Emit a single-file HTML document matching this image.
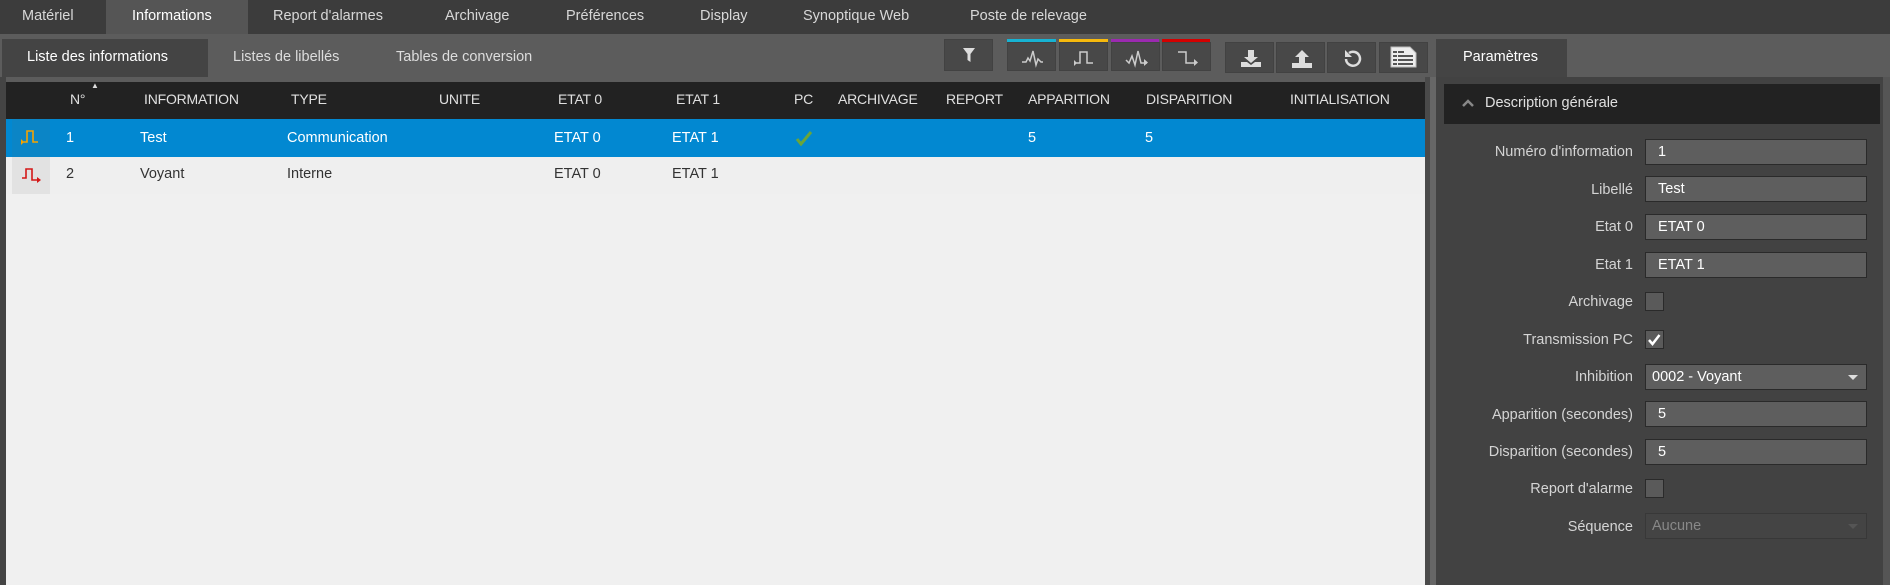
<!DOCTYPE html>
<html><head><meta charset="utf-8">
<style>
*{margin:0;padding:0;box-sizing:border-box}
body{width:1890px;height:585px;overflow:hidden;background:#5c5c5c;font-family:"Liberation Sans",sans-serif;font-size:14.5px;color:#ddd;position:relative}
.a{position:absolute;white-space:nowrap}
.top{left:0;top:0;width:1890px;height:34px;background:#3c3c3c}
.tt{top:8px;color:#d8d8d8}
.btn{position:absolute;top:42px;width:49px;height:29px;background:#484848;border:1px solid #424242}
.btn svg{position:absolute;left:12px;top:5px}
.th{top:91px;color:#e0e0e0;font-size:14px;letter-spacing:-0.2px}
.r1{top:130px;color:#fff}
.r2{top:166px;color:#333}
.lab{right:257px;color:#d4d4d4;text-align:right;font-size:14.5px}
.inp{left:1645px;width:222px;height:26px;background:#5e5e5e;border:1px solid #2a2a2a;color:#fff;padding:4px 0 0 12px}
.cb{left:1645px;width:19px;height:19px;background:#5a5a5a;border:1px solid #2a2a2a}
</style></head><body>
<div class="a top"></div>
<div class="a" style="left:106px;top:0;width:142px;height:34px;background:#555"></div>
<div class="a tt" style="left:22px">Matériel</div>
<div class="a tt" style="left:132px;color:#fff">Informations</div>
<div class="a tt" style="left:273px">Report d'alarmes</div>
<div class="a tt" style="left:445px">Archivage</div>
<div class="a tt" style="left:566px">Préférences</div>
<div class="a tt" style="left:700px">Display</div>
<div class="a tt" style="left:803px">Synoptique Web</div>
<div class="a tt" style="left:970px">Poste de relevage</div>

<div class="a" style="left:2px;top:39px;width:206px;height:38px;background:#444"></div>
<div class="a" style="left:27px;top:49px;color:#fff">Liste des informations</div>
<div class="a" style="left:233px;top:49px;color:#ddd">Listes de libellés</div>
<div class="a" style="left:396px;top:49px;color:#ddd">Tables de conversion</div>

<div class="btn" style="left:944px;top:39px;height:32px"><svg width="24" height="20" viewBox="0 0 24 20"><path d="M6 3h12l-4.5 6v8l-3-2V9z" fill="#ddd"/></svg></div>
<div class="a" style="left:1007px;top:39px;width:49px;height:3px;background:#17b3d3"></div>
<div class="a" style="left:1059px;top:39px;width:49px;height:3px;background:#f6b90d"></div>
<div class="a" style="left:1111px;top:39px;width:48px;height:3px;background:#9b2ab0"></div>
<div class="a" style="left:1162px;top:39px;width:48px;height:3px;background:#d40000"></div>
<div class="btn" style="left:1007px"><svg width="26" height="20" viewBox="0 0 26 20"><path d="M2 14h4l2-4 2 3 3-10 3 14 2-6 3 3h2" fill="none" stroke="#ccc" stroke-width="1.5"/></svg></div>
<div class="btn" style="left:1059px"><svg width="26" height="20" viewBox="0 0 26 20"><path d="M3 15h5V4h7v11h6" fill="none" stroke="#ccc" stroke-width="1.5"/><path d="M2 12v6l3-3z" fill="#ccc"/></svg></div>
<div class="btn" style="left:1111px"><svg width="26" height="20" viewBox="0 0 26 20"><path d="M2 12l3 3 3-7 3 9 3-14 3 12 6 0" fill="none" stroke="#ccc" stroke-width="1.5"/><path d="M20 11v7l4-3.5z" fill="#ccc"/></svg></div>
<div class="btn" style="left:1162px"><svg width="26" height="20" viewBox="0 0 26 20"><path d="M3 4h8v11h8" fill="none" stroke="#ccc" stroke-width="1.5"/><path d="M19 11v7l4-3.5z" fill="#ccc"/><path d="M11 4h0" stroke="#ccc"/></svg></div>

<div class="btn" style="left:1225px;height:31px"><svg width="26" height="22" viewBox="0 0 26 22"><path d="M10 2h6v7h4l-7 6-7-6h4z" fill="#ddd"/><path d="M3 14h6l4 3 4-3h6v5H3z" fill="#ddd"/></svg></div>
<div class="btn" style="left:1276px;height:31px"><svg width="26" height="22" viewBox="0 0 26 22"><path d="M10 15h6V9h4l-7-7-7 7h4z" fill="#ddd"/><path d="M3 15h20v5H3z" fill="#ddd"/></svg></div>
<div class="btn" style="left:1327px;height:31px"><svg width="26" height="22" viewBox="0 0 26 22"><path d="M9 5a7 7 0 1 1-3 6" fill="none" stroke="#ddd" stroke-width="2.5"/><path d="M5 2v7h7z" fill="#ddd"/></svg></div>
<div class="btn" style="left:1379px;height:31px"><svg width="28" height="22" viewBox="0 0 28 22" style="left:10px;top:3px"><path d="M1 1h19l6 6v14H1z" fill="#eee" stroke="#bbb"/><g fill="#555"><rect x="3" y="5" width="4" height="2"/><rect x="8" y="5" width="6" height="2"/><rect x="3" y="9" width="4" height="2"/><rect x="8" y="9" width="15" height="2"/><rect x="3" y="13" width="4" height="2"/><rect x="8" y="13" width="15" height="2"/><rect x="3" y="17" width="4" height="2"/><rect x="8" y="17" width="15" height="2"/></g></svg></div>

<div class="a" style="left:0;top:77px;width:6px;height:508px;background:#444"></div>
<div class="a" style="left:6px;top:82px;width:1419px;height:503px;background:#f0f0f0"></div>
<div class="a" style="left:6px;top:82px;width:1419px;height:37px;background:#222"></div>
<div class="a" style="left:6px;top:119px;width:1419px;height:38px;background:#0288d1"></div>
<div class="a" style="left:12px;top:119px;width:38px;height:38px;background:#0b85c6"></div>
<div class="a" style="left:6px;top:157px;width:1419px;height:37px;background:#efefef"></div>
<div class="a" style="left:12px;top:157px;width:38px;height:37px;background:#e2e2e2"></div>
<div class="a" style="left:1425px;top:77px;width:5px;height:508px;background:#4a4a4a"></div>
<div class="a" style="left:1430px;top:77px;width:6px;height:508px;background:#666"></div>

<div class="a" style="left:91px;top:81px;font-size:8px;color:#ddd">▲</div>
<div class="a th" style="left:70px">N°</div>
<div class="a th" style="left:144px">INFORMATION</div>
<div class="a th" style="left:291px">TYPE</div>
<div class="a th" style="left:439px">UNITE</div>
<div class="a th" style="left:558px">ETAT 0</div>
<div class="a th" style="left:676px">ETAT 1</div>
<div class="a th" style="left:794px">PC</div>
<div class="a th" style="left:838px">ARCHIVAGE</div>
<div class="a th" style="left:946px">REPORT</div>
<div class="a th" style="left:1028px">APPARITION</div>
<div class="a th" style="left:1146px">DISPARITION</div>
<div class="a th" style="left:1290px">INITIALISATION</div>

<svg class="a" style="left:20px;top:128px" width="22" height="18" viewBox="0 0 22 18"><path d="M2 14h5V3h6v11h5" fill="none" stroke="#f5a300" stroke-width="1.6"/><path d="M1 11v6l3-3z" fill="#f5a300"/></svg>
<svg class="a" style="left:20px;top:166px" width="22" height="18" viewBox="0 0 22 18"><path d="M2 12h4V3h6v11h5" fill="none" stroke="#d41818" stroke-width="1.6"/><path d="M17 11v6l4-3z" fill="#d41818"/></svg>
<div class="a r1" style="left:66px">1</div>
<div class="a r1" style="left:140px">Test</div>
<div class="a r1" style="left:287px">Communication</div>
<div class="a r1" style="left:554px">ETAT 0</div>
<div class="a r1" style="left:672px">ETAT 1</div>
<svg class="a" style="left:795px;top:130px" width="18" height="16" viewBox="0 0 18 16"><path d="M2 9l4 5 10-12" fill="none" stroke="#6aa53a" stroke-width="3"/></svg>
<div class="a r1" style="left:1028px">5</div>
<div class="a r1" style="left:1145px">5</div>
<div class="a r2" style="left:66px">2</div>
<div class="a r2" style="left:140px">Voyant</div>
<div class="a r2" style="left:287px">Interne</div>
<div class="a r2" style="left:554px">ETAT 0</div>
<div class="a r2" style="left:672px">ETAT 1</div>

<div class="a" style="left:1436px;top:39px;width:131px;height:38px;background:#444"></div>
<div class="a" style="left:1463px;top:49px;color:#fff">Paramètres</div>
<div class="a" style="left:1436px;top:77px;width:447px;height:508px;background:#424242"></div>
<div class="a" style="left:1883px;top:77px;width:7px;height:508px;background:#555"></div>
<div class="a" style="left:1444px;top:84px;width:436px;height:40px;background:#222"></div>
<svg class="a" style="left:1461px;top:98px" width="14" height="10" viewBox="0 0 14 10"><path d="M2 8l5-5 5 5" fill="none" stroke="#888" stroke-width="2.5"/></svg>
<div class="a" style="left:1485px;top:95px;color:#e0e0e0">Description générale</div>

<div class="a lab" style="top:144px">Numéro d'information</div><div class="a inp" style="top:139px">1</div>
<div class="a lab" style="top:182px">Libellé</div><div class="a inp" style="top:176px">Test</div>
<div class="a lab" style="top:219px">Etat 0</div><div class="a inp" style="top:214px">ETAT 0</div>
<div class="a lab" style="top:257px">Etat 1</div><div class="a inp" style="top:252px">ETAT 1</div>
<div class="a lab" style="top:294px">Archivage</div><div class="a cb" style="top:292px"></div>
<div class="a lab" style="top:332px">Transmission PC</div><div class="a cb" style="top:330px"><svg width="17" height="17" viewBox="0 0 17 17" style="position:absolute;left:0;top:0"><path d="M3 9l3.5 4 7-9" fill="none" stroke="#fff" stroke-width="2.5"/></svg></div>
<div class="a lab" style="top:369px">Inhibition</div><div class="a inp" style="top:364px;padding-left:6px">0002 - Voyant<span style="position:absolute;right:8px;top:10px;width:0;height:0;border-left:5px solid transparent;border-right:5px solid transparent;border-top:5px solid #ddd"></span></div>
<div class="a lab" style="top:407px">Apparition (secondes)</div><div class="a inp" style="top:401px">5</div>
<div class="a lab" style="top:444px">Disparition (secondes)</div><div class="a inp" style="top:439px">5</div>
<div class="a lab" style="top:481px">Report d'alarme</div><div class="a cb" style="top:479px"></div>
<div class="a lab" style="top:519px">Séquence</div><div class="a inp" style="top:513px;background:#444;border-color:#383838;color:#888;padding-left:6px">Aucune<span style="position:absolute;right:8px;top:10px;width:0;height:0;border-left:5px solid transparent;border-right:5px solid transparent;border-top:5px solid #555"></span></div>
</body></html>
